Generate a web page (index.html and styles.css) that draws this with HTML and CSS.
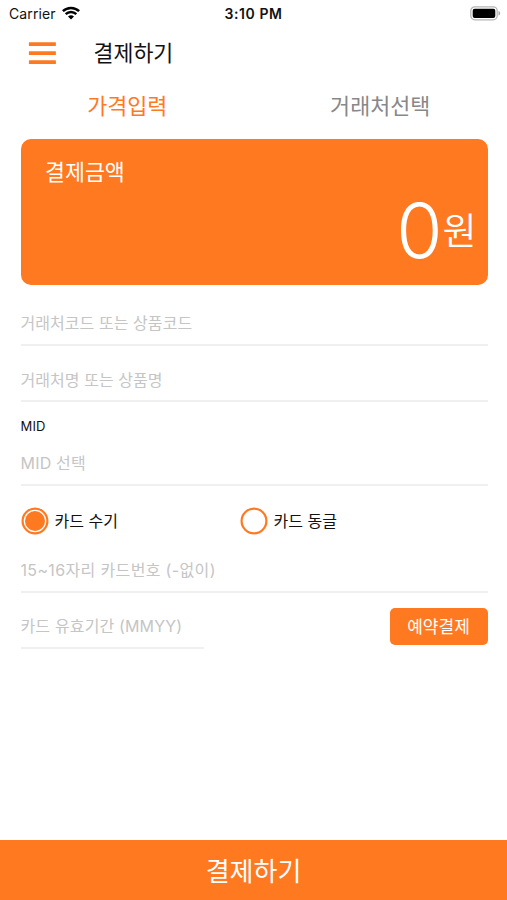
FILE: index.html
```html
<!DOCTYPE html>
<html lang="ko">
<head>
<meta charset="utf-8">
<title>결제하기</title>
<link rel="stylesheet" href="styles.css">
</head>
<body>
<div class="screen">
  <div class="status">
    <div class="carrier"><span>Carrier</span>
      <svg class="wifi" width="18" height="14" viewBox="0 0 18 14" fill="none" stroke="#000" stroke-width="2.5"><path d="M.9 5.2a11.6 11.6 0 0 1 16.2 0M3.7 8.1a7.6 7.6 0 0 1 10.6 0"/><path d="M9 13.6 6 10.6a4.3 4.3 0 0 1 6 0z" fill="#000" stroke="none"/></svg>
    </div>
    <span class="time">3:10 PM</span>
    <svg class="battery" width="31" height="15" viewBox="0 0 31 15"><rect x=".8" y=".8" width="26.4" height="13" rx="4" fill="#fff" stroke="#b5b5b5" stroke-width="1.3"/><rect x="2.7" y="2.7" width="22.6" height="9.2" rx="2" fill="#000"/><path d="M28.5 5v4.6c1.1-.4 1.7-1.2 1.7-2.3s-.6-1.9-1.7-2.3z" fill="#aaa"/></svg>
  </div>
  <header class="header">
    <svg class="menu" width="28" height="23" viewBox="0 0 28 23" fill="#ff7921"><rect x=".9" y=".2" width="27" height="3.8" rx=".4"/><rect x=".9" y="9.3" width="27" height="3.8" rx=".4"/><rect x=".9" y="18.3" width="27" height="3.8" rx=".4"/></svg>
    <h1 class="title">결제하기</h1>
  </header>
  <nav class="tabs"><span class="tab active">가격입력</span><span class="tab">거래처선택</span></nav>
  <section class="card">
    <div class="card-label">결제금액</div>
    <div class="amount"><span class="num">0</span><span class="won">원</span></div>
  </section>
  <form class="form">
    <div class="field first">거래처코드 또는 상품코드</div>
    <div class="field">거래처명 또는 상품명</div>
    <div class="label">MID</div>
    <div class="field mid">MID 선택</div>
    <div class="radios">
      <div class="radio"><svg width="28" height="28" viewBox="0 0 28 28"><circle cx="14" cy="14" r="12.4" fill="#fff" stroke="#ff7921" stroke-width="2.2"/><circle cx="14" cy="14" r="10" fill="#ff7921"/></svg><span>카드 수기</span></div>
      <div class="radio"><svg width="28" height="28" viewBox="0 0 28 28"><circle cx="14" cy="14" r="12.4" fill="#fff" stroke="#ff7921" stroke-width="2.2"/></svg><span>카드 동글</span></div>
    </div>
    <div class="field number">15~16자리 카드번호 (-없이)</div>
    <div class="expiry">
      <div class="field date">카드 유효기간 (MMYY)</div>
      <div class="reserve">예약결제</div>
    </div>
  </form>
  <div class="submit">결제하기</div>
</div>
</body>
</html>
```
FILE: styles.css
```css
* { box-sizing: border-box; }
body { margin: 0; background: #fff; color: #111; font-family: Inter, "Noto Sans CJK KR", sans-serif; }
.screen { width: 507px; height: 900px; display: flex; flex-direction: column; overflow: hidden; }
.status { height: 27px; display: grid; grid-template-columns: 1fr auto 1fr; align-items: center; padding: 0 6px 0 9px; font-size: 14px; }
.carrier { display: flex; align-items: center; gap: 6px; letter-spacing: .1px; }
.wifi { margin-top: -2px; }
.time { margin-right: 3px; font-weight: 600; letter-spacing: .6px; }
.battery { justify-self: end; }
.header { height: 51px; display: flex; align-items: center; padding: 0 28px; }
.menu { margin-top: 2px; }
.title { margin: 0 0 0 37.5px; font-size: 21.7px; font-weight: 400; line-height: 32px; }
.tabs { height: 54px; margin-top: -1px; display: grid; grid-template-columns: 1fr 1fr; align-items: center; text-align: center; color: #888; font-size: 21.8px; }
.active { color: #ff7921; padding-left: 1px; }
.card { height: 146.5px; margin: 7.5px 19.5px 0 20.5px; border-radius: 10px; background: #ff7921; color: #fff; padding: 17px 11px 0 24.5px; }
.card-label { font-size: 21.7px; line-height: 32px; }
.amount { display: flex; justify-content: flex-end; align-items: center; height: 86px; }
.num { font-size: 75px; line-height: 84px; font-weight: 350; }
.won { padding-top: 2px; font-size: 37px; line-height: 50px; font-weight: 350; }
.form { margin: 0 19.5px 0 20.5px; }
.field { height: 56px; padding-top: 22px; border-bottom: 2px solid #f0f0f0; color: #c5c5c5; font-size: 16px; line-height: 24px; letter-spacing: .06px; white-space: nowrap; }
.first { height: 61px; padding-top: 26px; }
.label { height: 24px; padding-top: 14px; font-size: 13px; line-height: 20px; letter-spacing: .15px; }
.mid { height: 60px; padding-top: 25px; letter-spacing: .2px; }
.radios { height: 71px; padding-bottom: 1px; display: grid; grid-template-columns: 219px 1fr; align-items: center; }
.radio { display: flex; align-items: center; gap: 6px; font-size: 16px; }
.radio span { margin-top: -2px; }
.number { height: 36px; padding-top: 1px; letter-spacing: .35px; }
.expiry { display: flex; justify-content: space-between; align-items: flex-start; }
.date { width: 183px; padding-top: 21px; letter-spacing: .15px; }
.reserve { width: 98px; height: 37px; margin-top: 15px; padding-top: 1px; border-radius: 5px; background: #ff7921; color: #fff; font-size: 17px; line-height: 37px; text-align: center; }
.submit { height: 60px; margin-top: auto; padding-top: 2px; background: #ff7921; color: #fff; font-size: 26px; line-height: 60px; text-align: center; }
```
